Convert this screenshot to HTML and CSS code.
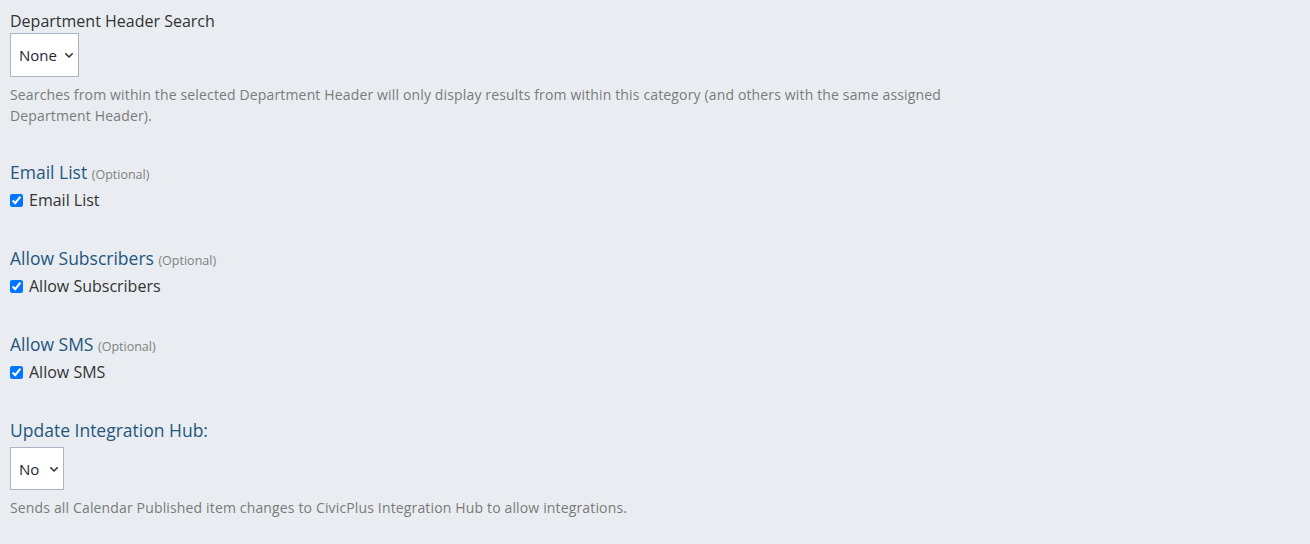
FILE: index.html
```html
<!DOCTYPE html>
<html lang="en">
<head>
<meta charset="utf-8">
<title>Calendar settings</title>
<link rel="stylesheet" href="styles.css">
</head>
<body>
<form class="form">
  <div class="field field-first">
    <label class="label" for="dept">Department Header Search</label>
    <div class="select-wrap">
      <select class="select" id="dept"><option>None</option></select>
      <svg class="chevron" width="8" height="5" viewBox="0 0 8 5" aria-hidden="true"><path d="M0.8 0.8 L4 4 L7.2 0.8" fill="none" stroke="#333" stroke-width="1.6" stroke-linecap="round" stroke-linejoin="round"/></svg>
    </div>
    <p class="help">Searches from within the selected Department Header will only display results from within this category (and others with the same assigned Department Header).</p>
  </div>

  <div class="field">
    <div class="heading">Email List <span class="optional">(Optional)</span></div>
    <label class="check"><input type="checkbox" checked> <span>Email List</span></label>
  </div>

  <div class="field">
    <div class="heading">Allow Subscribers <span class="optional">(Optional)</span></div>
    <label class="check"><input type="checkbox" checked> <span>Allow Subscribers</span></label>
  </div>

  <div class="field">
    <div class="heading">Allow SMS <span class="optional">(Optional)</span></div>
    <label class="check"><input type="checkbox" checked> <span>Allow SMS</span></label>
  </div>

  <div class="field">
    <div class="heading">Update Integration Hub:</div>
    <div class="select-wrap select-wrap-hub">
      <select class="select select-hub"><option>No</option></select>
      <svg class="chevron" width="8" height="5" viewBox="0 0 8 5" aria-hidden="true"><path d="M0.8 0.8 L4 4 L7.2 0.8" fill="none" stroke="#333" stroke-width="1.6" stroke-linecap="round" stroke-linejoin="round"/></svg>
    </div>
    <p class="help">Sends all Calendar Published item changes to CivicPlus Integration Hub to allow integrations.</p>
  </div>
</form>
</body>
</html>
```

FILE: styles.css
```css
html, body {
  margin: 0;
  padding: 0;
  background: #e9edf1;
}
body {
  font-family: "Open Sans", "Liberation Sans", sans-serif;
  color: #333;
  height: 544px;
  overflow: hidden;
}
.form {
  padding: 10px 10px 0 10px;
  max-width: 960px;
}
.field {
  display: flex;
  flex-direction: column;
  align-items: flex-start;
  margin-top: 34px;
}
.field-first {
  margin-top: 0;
}
.field + .field + .field {
  margin-top: 35px;
}
.label {
  font-size: 16px;
  line-height: 22px;
  color: #333;
}
.select-wrap {
  position: relative;
  margin-top: 1px;
  display: flex;
}
.select-wrap-hub {
  margin-top: 5px;
}
.select {
  -webkit-appearance: none;
  appearance: none;
  height: 44px;
  background: #fff;
  border: 1px solid #a9b4c2;
  border-radius: 0;
  font-family: inherit;
  font-size: 15px;
  color: #262338;
  padding: 0 21px 0 8px;
  margin: 0;
}
.select-hub {
  height: 43px;
  padding-right: 23px;
}
.chevron {
  position: absolute;
  right: 6px;
  top: 50%;
  margin-top: -2px;
  pointer-events: none;
}
.help {
  margin: 7px 0 0 0;
  font-size: 14px;
  letter-spacing: 0.15px;
  line-height: 21px;
  color: #7a7a7a;
}
.heading {
  font-size: 17.5px;
  line-height: 24px;
  height: 24px;
  color: #24567e;
}
.optional {
  font-size: 12.5px;
  line-height: 1;
  color: #808080;
}
.check {
  margin-top: 5px;
  display: flex;
  align-items: center;
  height: 22px;
  font-size: 16px;
  line-height: 22px;
  color: #333;
}
.check input {
  margin: 0 6px 0 0;
  width: 13px;
  height: 13px;
}
```
